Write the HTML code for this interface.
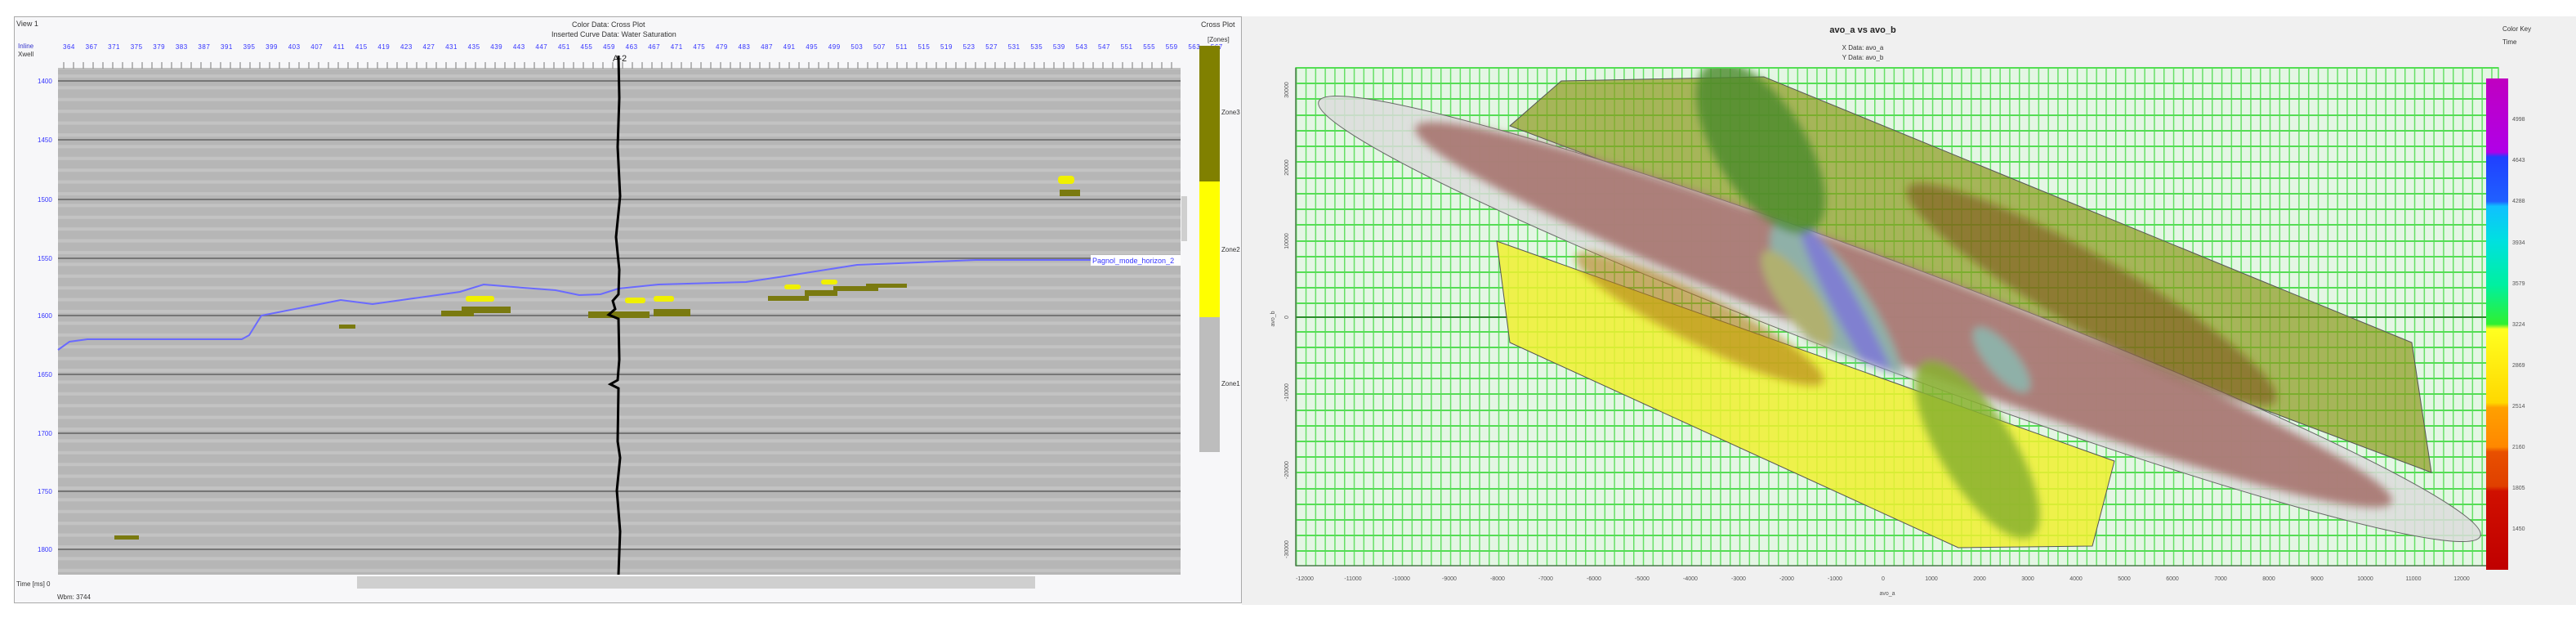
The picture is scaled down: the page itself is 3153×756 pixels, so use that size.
<!DOCTYPE html>
<html><head><meta charset="utf-8"><style>
html,body{margin:0;padding:0;background:#fff;width:3153px;height:756px;overflow:hidden;font-family:"Liberation Sans",sans-serif}
.abs{position:absolute}
</style></head><body>
<!-- LEFT PANEL -->
<div class="abs" style="left:17px;top:20px;width:1503px;height:718px;background:#f7f7f9;border:1px solid #aaa;box-sizing:border-box"></div>
<div class="abs" style="left:20px;top:24px;font-size:9px;color:#333">View 1</div>
<div class="abs" style="left:700px;top:25px;font-size:9px;color:#333">Color Data: Cross Plot</div>
<div class="abs" style="left:675px;top:37px;font-size:9px;color:#333">Inserted Curve Data: Water Saturation</div>
<div class="abs" style="left:1470px;top:25px;font-size:9px;color:#333">Cross Plot</div>
<div class="abs" style="left:1478px;top:44px;font-size:8px;color:#333">[Zones]</div>
<div class="abs" style="left:22px;top:52px;font-size:8px;color:#33c;line-height:10px">Inline<br><span style="color:#333">Xwell</span></div>
<div class="abs" style="left:77px;top:53px;font-size:8px;color:#33f;letter-spacing:0.5px;white-space:nowrap;word-spacing:10px">364 367 371 375 379 383 387 391 395 399 403 407 411 415 419 423 427 431 435 439 443 447 451 455 459 463 467 471 475 479 483 487 491 495 499 503 507 511 515 519 523 527 531 535 539 543 547 551 555 559 563 567</div>
<div class="abs" style="left:750px;top:66px;font-size:11px;color:#222">A-2</div>
<svg class="abs" style="left:0;top:0" width="1520" height="756">
<defs>
<pattern id="tk" width="12" height="14" patternUnits="userSpaceOnUse"><line x1="6" y1="6" x2="6" y2="14" stroke="#777" stroke-width="1"/></pattern>
<pattern id="st" width="10" height="14.4" patternUnits="userSpaceOnUse" y="85"><rect width="10" height="14.4" fill="#b6b6b6"/><rect y="6" width="10" height="4" fill="#c3c3c3"/></pattern>
</defs>
<rect x="71" y="72" width="1374" height="14" fill="url(#tk)"/>
<line x1="71" y1="84" x2="1445" y2="84" stroke="#888"/>
<rect x="71" y="85" width="1374" height="618" fill="url(#st)"/>
<g stroke="#767676" stroke-width="2">
<line x1="71" y1="99" x2="1445" y2="99"/><line x1="71" y1="171" x2="1445" y2="171"/><line x1="71" y1="244" x2="1445" y2="244"/><line x1="71" y1="316" x2="1445" y2="316"/><line x1="71" y1="386" x2="1445" y2="386"/><line x1="71" y1="458" x2="1445" y2="458"/><line x1="71" y1="530" x2="1445" y2="530"/><line x1="71" y1="601" x2="1445" y2="601"/><line x1="71" y1="672" x2="1445" y2="672"/>
</g>
<g font-size="8" fill="#33f" font-family="Liberation Sans">
<text x="46" y="102">1400</text><text x="46" y="174">1450</text><text x="46" y="247">1500</text><text x="46" y="319">1550</text><text x="46" y="389">1600</text><text x="46" y="461">1650</text><text x="46" y="533">1700</text><text x="46" y="604">1750</text><text x="46" y="675">1800</text>
</g>
<g fill="#7a7a10">
<rect x="540" y="380" width="40" height="7"/><rect x="565" y="375" width="60" height="8"/><rect x="720" y="381" width="75" height="8"/><rect x="800" y="378" width="45" height="9"/><rect x="940" y="362" width="50" height="6"/><rect x="985" y="355" width="40" height="7"/><rect x="1020" y="350" width="55" height="6"/><rect x="1060" y="347" width="50" height="5"/><rect x="1297" y="232" width="25" height="8"/><rect x="415" y="397" width="20" height="5"/><rect x="140" y="655" width="30" height="5"/>
</g>
<g fill="#f0f000">
<rect x="570" y="362" width="35" height="7" rx="3"/><rect x="765" y="364" width="25" height="7" rx="3"/><rect x="800" y="362" width="25" height="7" rx="3"/><rect x="960" y="348" width="20" height="6" rx="3"/><rect x="1005" y="342" width="20" height="6" rx="3"/><rect x="1295" y="215" width="20" height="10" rx="4"/>
</g>
<polyline fill="none" stroke="#6a6aff" stroke-width="2" points="71,428 85,418 107,415 296,415 305,410 320,386 417,367 456,372 563,357 592,348 640,352 680,355 709,361 735,360 757,353 806,348 913,345 960,338 1049,324 1100,322 1194,318 1335,318"/>
<rect x="1335" y="312" width="110" height="13" fill="#fff"/>
<text x="1337" y="322" font-size="9" fill="#33f" font-family="Liberation Sans">Pagnol_mode_horizon_2</text>
<polyline fill="none" stroke="#000" stroke-width="3" points="757,68 758,120 756,180 759,240 754,290 758,330 757,360 750,368 753,378 745,385 757,390 758,440 756,465 747,470 757,475 756,540 759,560 755,600 759,650 757,703"/>
<rect x="1468" y="56" width="25" height="166" fill="#808000"/>
<rect x="1468" y="222" width="25" height="166" fill="#ffff00"/>
<rect x="1468" y="388" width="25" height="165" fill="#bdbdbd"/>
<g font-size="8" fill="#333" font-family="Liberation Sans"><text x="1495" y="140">Zone3</text><text x="1495" y="308">Zone2</text><text x="1495" y="472">Zone1</text></g>
<rect x="437" y="705" width="830" height="15" fill="#cfcfcf"/>
<rect x="1446" y="240" width="7" height="55" fill="#cfcfcf"/>
<text x="20" y="717" font-size="8" fill="#333" font-family="Liberation Sans">Time [ms] 0</text>
<text x="70" y="733" font-size="8" fill="#333" font-family="Liberation Sans">Wbm: 3744</text>
</svg>

<!-- RIGHT PANEL -->
<div class="abs" style="left:1520px;top:20px;width:1633px;height:720px;background:#f0f0f0"></div>
<svg class="abs" style="left:1520px;top:0" width="1633" height="756">
<defs>
<pattern id="gv" x="66" y="0" width="11.8" height="10" patternUnits="userSpaceOnUse"><rect width="11.8" height="10" fill="#e4f6e4"/><rect width="1.5" height="10" fill="#66e066"/></pattern>
<clipPath id="pc"><rect x="66" y="83" width="1472" height="609"/></clipPath>
<clipPath id="ec"><ellipse cx="805" cy="390" rx="759" ry="64" transform="rotate(20.5 805 390)"/></clipPath>
<filter id="bl"><feGaussianBlur stdDeviation="5"/></filter>
</defs>
<text x="760" y="40" font-size="11" font-weight="bold" text-anchor="middle" fill="#222" font-family="Liberation Sans">avo_a vs avo_b</text>
<text x="760" y="61" font-size="8" text-anchor="middle" fill="#333" font-family="Liberation Sans">X Data: avo_a</text>
<text x="760" y="73" font-size="8" text-anchor="middle" fill="#333" font-family="Liberation Sans">Y Data: avo_b</text>
<text x="1543" y="38" font-size="8" fill="#333" font-family="Liberation Sans">Color Key</text>
<text x="1543" y="54" font-size="8" fill="#333" font-family="Liberation Sans">Time</text>
<rect x="66" y="83" width="1472" height="609" fill="url(#gv)"/>
<g stroke="#55dd55" stroke-width="2">
<line x1="66" y1="83" x2="1538" y2="83"/><line x1="66" y1="102" x2="1538" y2="102"/><line x1="66" y1="121" x2="1538" y2="121"/><line x1="66" y1="141" x2="1538" y2="141"/><line x1="66" y1="160" x2="1538" y2="160"/><line x1="66" y1="179" x2="1538" y2="179"/><line x1="66" y1="198" x2="1538" y2="198"/><line x1="66" y1="218" x2="1538" y2="218"/><line x1="66" y1="237" x2="1538" y2="237"/><line x1="66" y1="256" x2="1538" y2="256"/><line x1="66" y1="275" x2="1538" y2="275"/><line x1="66" y1="295" x2="1538" y2="295"/><line x1="66" y1="314" x2="1538" y2="314"/><line x1="66" y1="333" x2="1538" y2="333"/><line x1="66" y1="352" x2="1538" y2="352"/><line x1="66" y1="371" x2="1538" y2="371"/><line x1="66" y1="406" x2="1538" y2="406"/><line x1="66" y1="425" x2="1538" y2="425"/><line x1="66" y1="444" x2="1538" y2="444"/><line x1="66" y1="463" x2="1538" y2="463"/><line x1="66" y1="482" x2="1538" y2="482"/><line x1="66" y1="502" x2="1538" y2="502"/><line x1="66" y1="521" x2="1538" y2="521"/><line x1="66" y1="540" x2="1538" y2="540"/><line x1="66" y1="559" x2="1538" y2="559"/><line x1="66" y1="578" x2="1538" y2="578"/><line x1="66" y1="598" x2="1538" y2="598"/><line x1="66" y1="617" x2="1538" y2="617"/><line x1="66" y1="636" x2="1538" y2="636"/><line x1="66" y1="655" x2="1538" y2="655"/><line x1="66" y1="674" x2="1538" y2="674"/>
</g>
<line x1="66" y1="388" x2="1538" y2="388" stroke="#2a8a2a" stroke-width="2"/>
<g clip-path="url(#pc)">
<polygon points="391,99 639,94 1432,419 1456,578 328,154" fill="#8c9a1e" fill-opacity="0.7" stroke="#555" stroke-width="1"/>
<polygon points="312,295 328,419 877,670 1041,668 1068,564" fill="#f0f030" fill-opacity="0.85" stroke="#555" stroke-width="1"/>
<ellipse cx="805" cy="390" rx="759" ry="64" transform="rotate(20.5 805 390)" fill="#dcdcdc" fill-opacity="0.85" stroke="#666"/>
<g filter="url(#bl)">
<g clip-path="url(#ec)">
<ellipse cx="810" cy="385" rx="640" ry="58" transform="rotate(21 810 385)" fill="#a87672" fill-opacity="0.92"/>
<ellipse cx="730" cy="390" rx="140" ry="45" transform="rotate(58 730 390)" fill="#8fb0a8"/>
<ellipse cx="745" cy="385" rx="130" ry="16" transform="rotate(62 745 385)" fill="#8080d0"/>
<ellipse cx="680" cy="365" rx="70" ry="22" transform="rotate(55 680 365)" fill="#b0b070"/>
<ellipse cx="930" cy="440" rx="50" ry="18" transform="rotate(50 930 440)" fill="#8fb0a8"/>
</g>
<ellipse cx="635" cy="180" rx="120" ry="55" transform="rotate(58 635 180)" fill="#4a8a2a" fill-opacity="0.8"/>
<ellipse cx="1040" cy="360" rx="260" ry="45" transform="rotate(30 1040 360)" fill="#7a4a10" fill-opacity="0.55"/>
<ellipse cx="560" cy="390" rx="170" ry="30" transform="rotate(27 560 390)" fill="#b07a10" fill-opacity="0.6"/>
<ellipse cx="900" cy="550" rx="125" ry="45" transform="rotate(58 900 550)" fill="#88b030" fill-opacity="0.85"/>
</g>
</g>
<rect x="66" y="83" width="1472" height="609" fill="none" stroke="#55dd55" stroke-width="1.5"/>
<line x1="66" y1="83" x2="66" y2="692" stroke="#444"/>
<line x1="66" y1="692" x2="1538" y2="692" stroke="#444"/>
<g font-size="7" fill="#555" font-family="Liberation Sans" text-anchor="middle">
<text x="77" y="710">-12000</text><text x="136" y="710">-11000</text><text x="195" y="710">-10000</text><text x="254" y="710">-9000</text><text x="313" y="710">-8000</text><text x="372" y="710">-7000</text><text x="431" y="710">-6000</text><text x="490" y="710">-5000</text><text x="549" y="710">-4000</text><text x="608" y="710">-3000</text><text x="667" y="710">-2000</text><text x="726" y="710">-1000</text><text x="785" y="710">0</text><text x="844" y="710">1000</text><text x="903" y="710">2000</text><text x="962" y="710">3000</text><text x="1021" y="710">4000</text><text x="1080" y="710">5000</text><text x="1139" y="710">6000</text><text x="1198" y="710">7000</text><text x="1257" y="710">8000</text><text x="1316" y="710">9000</text><text x="1375" y="710">10000</text><text x="1434" y="710">11000</text><text x="1493" y="710">12000</text>
<text x="790" y="728">avo_a</text>
</g>
<g font-size="7" fill="#555" font-family="Liberation Sans" text-anchor="middle">
<text transform="translate(57,110) rotate(-90)">30000</text><text transform="translate(57,205) rotate(-90)">20000</text><text transform="translate(57,295) rotate(-90)">10000</text><text transform="translate(57,388) rotate(-90)">0</text><text transform="translate(57,480) rotate(-90)">-10000</text><text transform="translate(57,575) rotate(-90)">-20000</text><text transform="translate(57,672) rotate(-90)">-30000</text><text transform="translate(40,390) rotate(-90)">avo_b</text>
</g>
<defs><linearGradient id="ck" x1="0" y1="0" x2="0" y2="1">
<stop offset="0" stop-color="#c000c0"/><stop offset="0.15" stop-color="#b000e8"/><stop offset="0.16" stop-color="#2040ff"/><stop offset="0.25" stop-color="#2060ff"/><stop offset="0.26" stop-color="#10c0ff"/><stop offset="0.33" stop-color="#00e0e0"/><stop offset="0.42" stop-color="#00f0a0"/><stop offset="0.5" stop-color="#30f030"/><stop offset="0.51" stop-color="#ffff20"/><stop offset="0.66" stop-color="#ffd800"/><stop offset="0.67" stop-color="#ffa000"/><stop offset="0.75" stop-color="#ff8800"/><stop offset="0.76" stop-color="#e85000"/><stop offset="0.83" stop-color="#e04000"/><stop offset="0.84" stop-color="#d01000"/><stop offset="1" stop-color="#c00000"/></linearGradient></defs>
<rect x="1523" y="96" width="27" height="601" fill="url(#ck)"/>
<g font-size="7" fill="#555" font-family="Liberation Sans">
<text x="1555" y="148">4998</text><text x="1555" y="198">4643</text><text x="1555" y="248">4288</text><text x="1555" y="299">3934</text><text x="1555" y="349">3579</text><text x="1555" y="399">3224</text><text x="1555" y="449">2869</text><text x="1555" y="499">2514</text><text x="1555" y="549">2160</text><text x="1555" y="599">1805</text><text x="1555" y="649">1450</text>
</g>
</svg>
</body></html>
